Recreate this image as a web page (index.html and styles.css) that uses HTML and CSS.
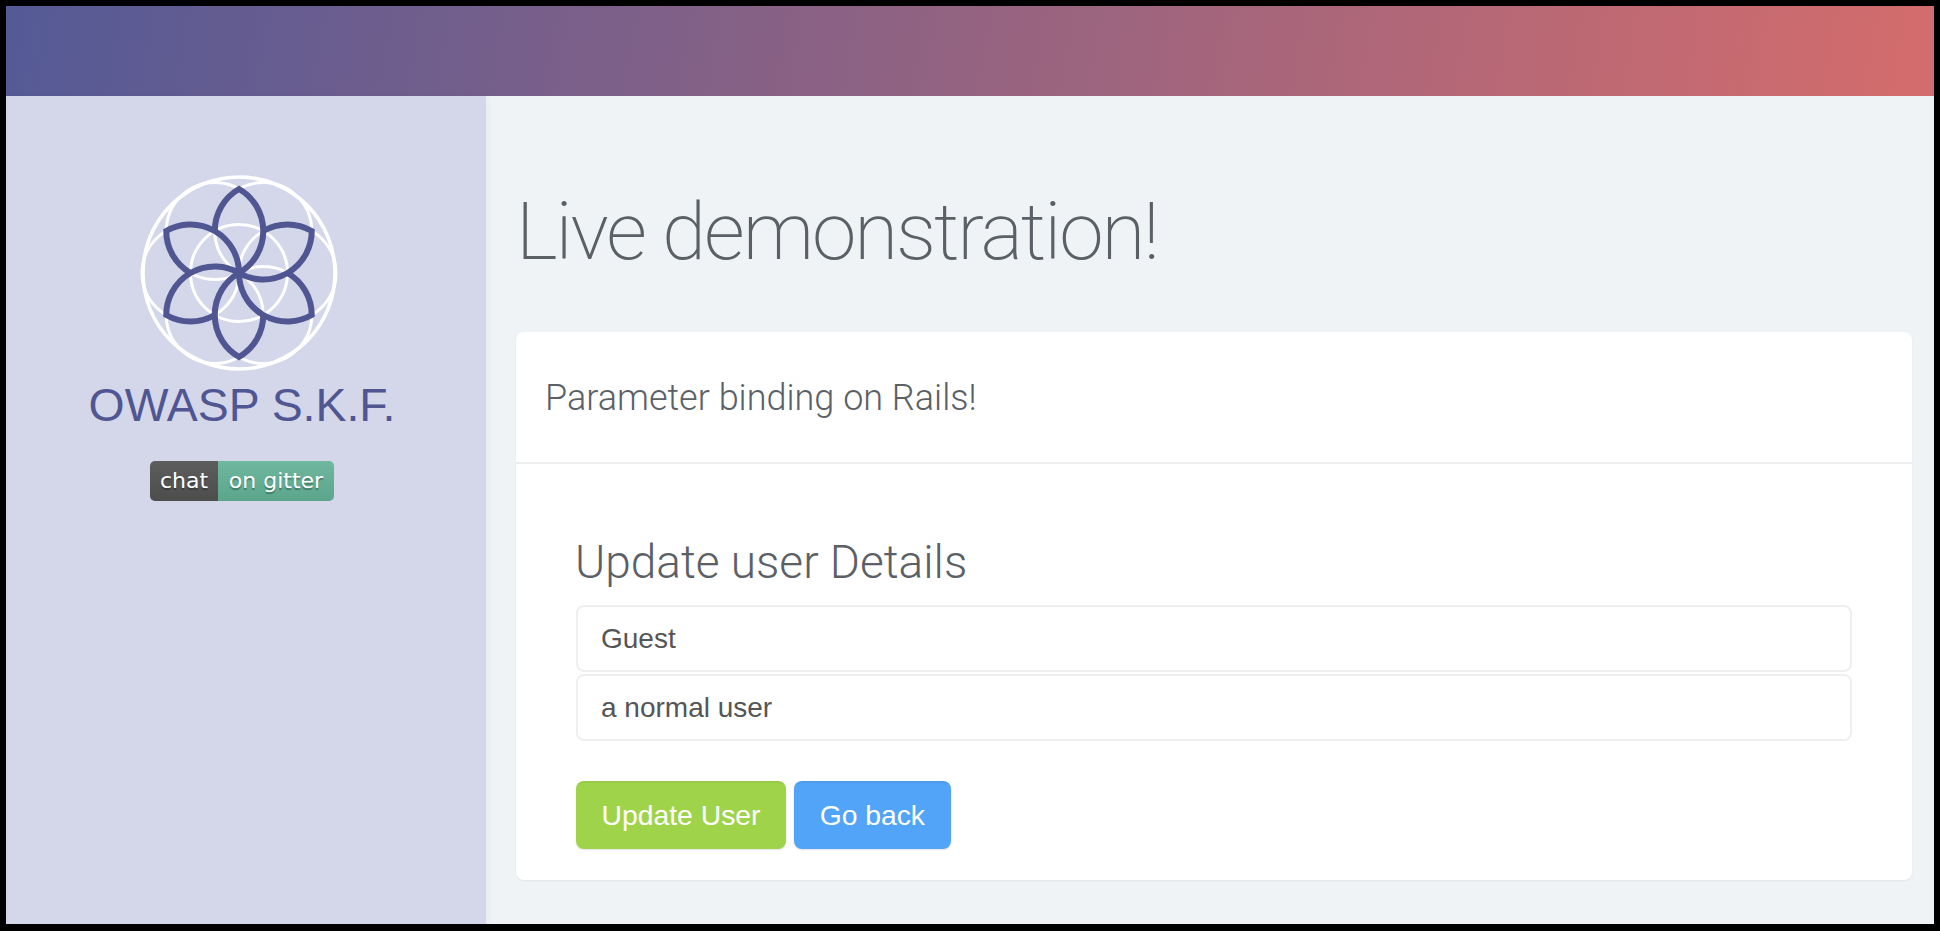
FILE: index.html
```html
<!DOCTYPE html>
<html lang="en">
<head>
<meta charset="utf-8">
<title>Live demonstration!</title>
<link rel="stylesheet" href="styles.css">
</head>
<body>
<div class="app">
  <header class="topbar"></header>
  <div class="layout">
    <aside class="sidebar">
      <svg class="logo" viewBox="-100 -100 200 200" aria-label="OWASP SKF logo">
        <defs>
          <path id="petal" d="M-24.25 -42 A48.5 48.5 0 0 1 0 -84 A48.5 48.5 0 0 1 0 0"/>
        </defs>
        <g class="logo-rings">
          <circle r="96"/>
          <circle r="48.5"/>
          <circle cx="48.5" cy="0" r="48.5"/>
          <circle cx="24.25" cy="42" r="48.5"/>
          <circle cx="-24.25" cy="42" r="48.5"/>
          <circle cx="-48.5" cy="0" r="48.5"/>
          <circle cx="-24.25" cy="-42" r="48.5"/>
          <circle cx="24.25" cy="-42" r="48.5"/>
        </g>
        <g class="logo-petals">
          <use href="#petal"/>
          <use href="#petal" transform="rotate(60)"/>
          <use href="#petal" transform="rotate(120)"/>
          <use href="#petal" transform="rotate(180)"/>
          <use href="#petal" transform="rotate(240)"/>
          <use href="#petal" transform="rotate(300)"/>
        </g>
      </svg>
      <div class="brand">OWASP S.K.F.</div>
      <div class="badge"><span class="badge-left">chat</span><span class="badge-right">on gitter</span></div>
    </aside>
    <main class="content">
      <h1 class="title">Live demonstration!</h1>
      <section class="card">
        <div class="card-header">Parameter binding on Rails!</div>
        <div class="card-body">
          <h2 class="form-title">Update user Details</h2>
          <form class="form">
            <input class="field" type="text" value="Guest">
            <input class="field" type="text" value="a normal user">
            <div class="actions">
              <button class="btn btn-green" type="button">Update User</button>
              <button class="btn btn-blue" type="button">Go back</button>
            </div>
          </form>
        </div>
      </section>
    </main>
  </div>
</div>
</body>
</html>
```
FILE: styles.css
```css
* { box-sizing: border-box; }
html, body { height: 100%; }
body {
  margin: 0;
  padding: 6px 6px 7px 6px;
  background: #000;
  font-family: "Liberation Sans", Arial, sans-serif;
  color: #555;
  overflow: hidden;
}
.app { height: 100%; display: flex; flex-direction: column; background: #eff3f6; }
.topbar {
  height: 90px;
  flex: none;
  background: linear-gradient(100deg, #545a96 0%, #d46c6c 100%);
}
.layout { flex: 1; display: flex; min-height: 0; }
.sidebar {
  width: 480px;
  flex: none;
  background: #d4d6ea;
  display: flex;
  flex-direction: column;
  align-items: center;
  padding: 77px 8px 0 0;
  box-shadow: 3px 0 6px rgba(0, 0, 0, 0.03);
}
.logo { width: 200px; height: 200px; flex: none; margin-right: 6px; }
.logo-rings { fill: none; stroke: #fff; stroke-width: 3; }
.logo-rings circle:first-child { stroke-width: 3.6; }
.logo-petals { fill: none; stroke: #4f5692; stroke-width: 6; stroke-linejoin: miter; }
.brand {
  margin-top: 4px;
  font-size: 46.4px;
  line-height: 56px;
  color: #4f5692;
}
.badge {
  margin-top: 28px;
  display: flex;
  height: 40px;
  border-radius: 5px;
  overflow: hidden;
  font-family: "DejaVu Sans", Verdana, sans-serif;
  font-size: 22px;
  line-height: 40px;
  color: #fff;
  text-shadow: 0 2px 1px rgba(0, 0, 0, 0.3);
}
.badge-left {
  width: 68px;
  text-align: center;
  background: linear-gradient(#5d5d5d, #4d4d4d);
}
.badge-right {
  width: 116px;
  text-align: center;
  background: linear-gradient(#6fb89f, #5aa58b);
}
.content { flex: 1; padding: 0 22px 0 30px; min-width: 0; }
.title {
  margin: 0;
  padding-top: 86px;
  height: 236px;
  font-family: Roboto, "Liberation Sans", sans-serif;
  font-weight: 200;
  font-size: 80px;
  letter-spacing: -2.1px;
  line-height: 100px;
  color: #5b6066;
}
.card {
  background: #fff;
  border-radius: 8px;
  box-shadow: 0 1px 2px rgba(0, 0, 0, 0.06);
  height: 548px;
}
.card-header {
  height: 132px;
  padding: 2px 29px 0;
  border-bottom: 2px solid #eceef0;
  display: flex;
  align-items: center;
  font-family: Roboto, "Liberation Sans", sans-serif;
  font-weight: 300;
  font-size: 36px;
  color: #5b6066;
}
.card-body { padding: 73px 60px 0 60px; }
.form-title {
  margin: 0 0 18px -1px;
  font-family: Roboto, "Liberation Sans", sans-serif;
  font-weight: 300;
  font-size: 46px;
  line-height: 50px;
  color: #5b6066;
}
.form { display: flex; flex-direction: column; }
.field {
  display: block;
  width: 100%;
  height: 67px;
  margin-bottom: 2px;
  padding: 0 23px;
  border: 2px solid #eeeff1;
  border-radius: 8px;
  background: #fff;
  font-family: "Liberation Sans", Arial, sans-serif;
  font-size: 28px;
  color: #555;
  outline: none;
}
.actions { display: flex; gap: 8px; margin-top: 38px; }
.btn {
  height: 68px;
  padding: 0 25.6px 2px;
  border: 0;
  border-radius: 8px;
  color: #fff;
  font-family: "Liberation Sans", Arial, sans-serif;
  font-size: 28.3px;
  box-shadow: 0 1px 2px rgba(0, 0, 0, 0.12);
}
.btn-green { background: #9fd44a; border-top: 2px solid #97cb45; }
.btn-blue { background: #52a4f9; border-top: 2px solid #4d9bee; }
```
